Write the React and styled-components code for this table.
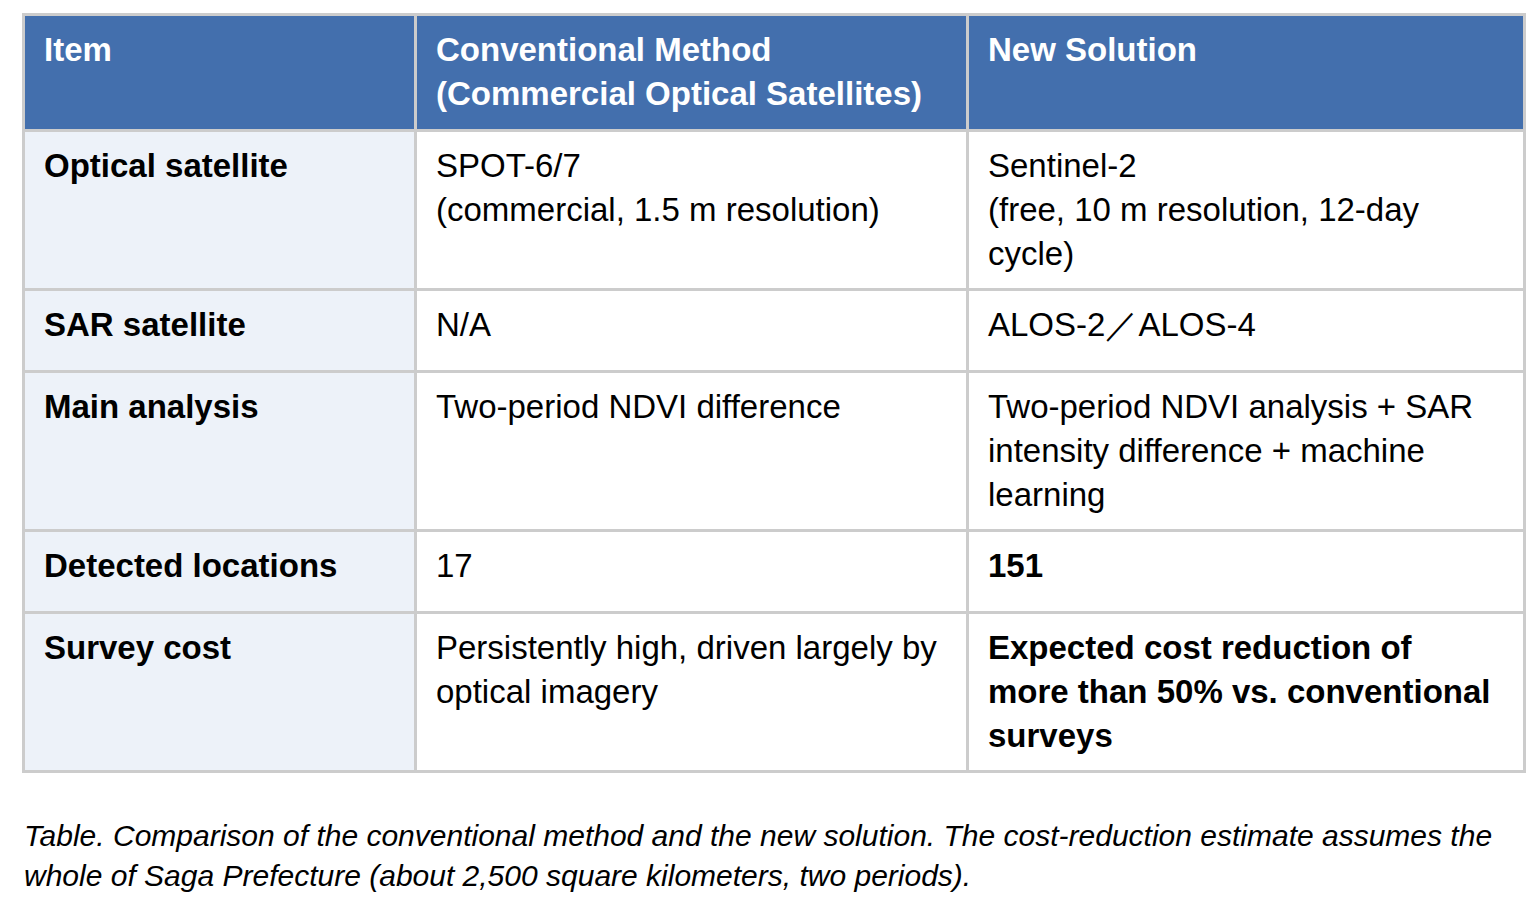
import React from 'react';
import styled, { createGlobalStyle } from 'styled-components';

const GlobalStyle = createGlobalStyle`
  html, body {
    margin: 0;
    padding: 0;
    background: #ffffff;
  }
  body {
    font-family: 'Liberation Sans', Arial, sans-serif;
    color: #000;
  }
`;

const Page = styled.div`
  padding: 13px 13px 0 22px;
`;

const Table = styled.table`
  width: 1501px;
  table-layout: fixed;
  border-collapse: collapse;
  border: 3px solid #cccccc;
  font-size: 33px;
  line-height: 44px;
`;

const HeadCell = styled.th`
  background: #436fad;
  color: #ffffff;
  font-weight: bold;
  text-align: left;
  vertical-align: top;
  padding: 12px 26px 13px 19px;
  border: 3px solid #cccccc;
`;

const Row = styled.tr`
  height: 82px;
`;

const Cell = styled.td`
  background: ${(p) => (p.$label ? '#edf2f9' : '#ffffff')};
  font-weight: ${(p) => (p.$label || p.$strong ? 'bold' : 'normal')};
  vertical-align: top;
  padding: 12px 26px 12px 19px;
  border: 3px solid #cccccc;
`;

const Caption = styled.p`
  margin: 43px 0 0 2px;
  font-style: italic;
  font-size: 30px;
  line-height: 40px;
  max-width: 1490px;
`;

const rows = [
  {
    label: 'Optical satellite',
    old: ['SPOT-6/7', <br key="b" />, '(commercial, 1.5 m resolution)'],
    next: ['Sentinel-2', <br key="b" />, '(free, 10 m resolution, 12-day cycle)'],
  },
  { label: 'SAR satellite', old: 'N/A', next: 'ALOS-2／ALOS-4' },
  {
    label: 'Main analysis',
    old: 'Two-period NDVI difference',
    next: 'Two-period NDVI analysis + SAR intensity difference + machine learning',
  },
  { label: 'Detected locations', old: '17', next: '151', strong: true },
  {
    label: 'Survey cost',
    old: 'Persistently high, driven largely by optical imagery',
    next: 'Expected cost reduction of more than 50% vs. conventional surveys',
    strong: true,
  },
];

export default function App() {
  return (
    <Page>
      <GlobalStyle />
      <Table>
        <colgroup>
          <col style={{ width: '392px' }} />
          <col style={{ width: '552px' }} />
          <col style={{ width: '557px' }} />
        </colgroup>
        <thead>
          <tr>
            <HeadCell>Item</HeadCell>
            <HeadCell>
              Conventional Method
              <br />
              (Commercial Optical Satellites)
            </HeadCell>
            <HeadCell>New Solution</HeadCell>
          </tr>
        </thead>
        <tbody>
          {rows.map((r) => (
            <Row key={r.label}>
              <Cell $label>{r.label}</Cell>
              <Cell>{r.old}</Cell>
              <Cell $strong={r.strong}>{r.next}</Cell>
            </Row>
          ))}
        </tbody>
      </Table>
      <Caption>
        Table. Comparison of the conventional method and the new solution. The cost-reduction
        estimate assumes the whole of Saga Prefecture (about 2,500 square kilometers, two periods).
      </Caption>
    </Page>
  );
}
